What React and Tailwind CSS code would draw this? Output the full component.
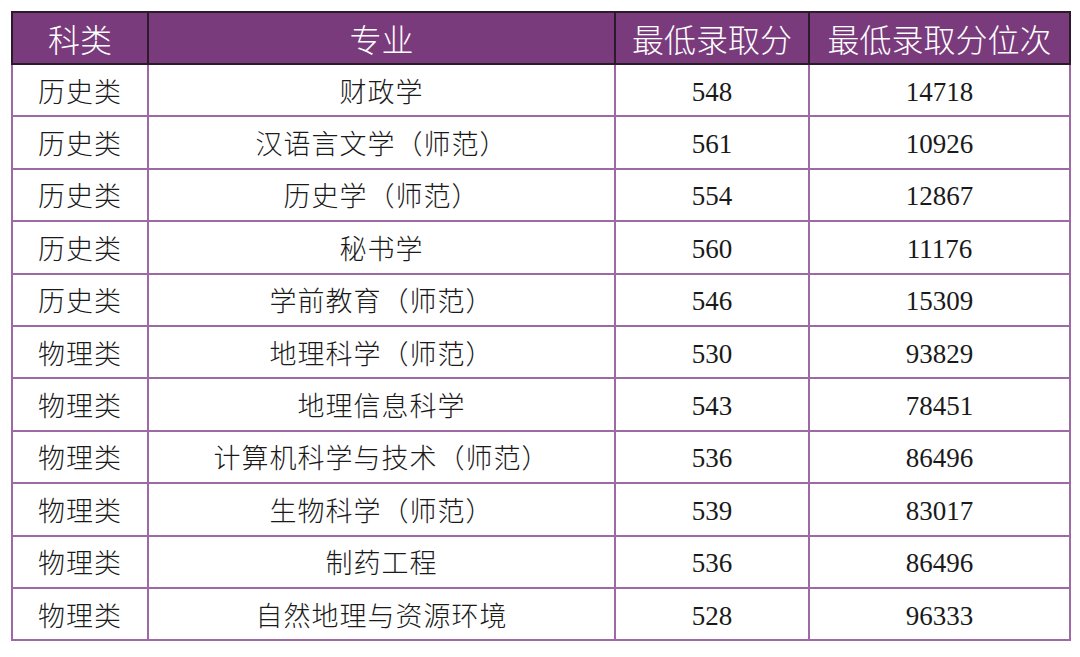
import React from 'react';

const rows = [
  ['历史类', '财政学', '548', '14718'],
  ['历史类', '汉语言文学（师范）', '561', '10926'],
  ['历史类', '历史学（师范）', '554', '12867'],
  ['历史类', '秘书学', '560', '11176'],
  ['历史类', '学前教育（师范）', '546', '15309'],
  ['物理类', '地理科学（师范）', '530', '93829'],
  ['物理类', '地理信息科学', '543', '78451'],
  ['物理类', '计算机科学与技术（师范）', '536', '86496'],
  ['物理类', '生物科学（师范）', '539', '83017'],
  ['物理类', '制药工程', '536', '86496'],
  ['物理类', '自然地理与资源环境', '528', '96333'],
];

const cjk = { fontFamily: '"Noto Sans CJK SC", sans-serif' };
const num = { fontFamily: '"Liberation Serif", "Noto Sans CJK SC", serif' };

const App = () => {
  return (
    <div className="w-[1080px] h-[657px] bg-white pt-[11px] pl-[11px]">
      <table className="border-collapse table-fixed w-[1058px]">
        <colgroup>
          <col className="w-[136px]" />
          <col className="w-[467px]" />
          <col className="w-[194px]" />
          <col className="w-[261px]" />
        </colgroup>
        <thead>
          <tr className="h-[52px] bg-[#7a3b7c] text-white text-[32px] leading-none">
            {['科类', '专业', '最低录取分', '最低录取分位次'].map((h) => (
              <th key={h} className="border-2 border-[#2a1a2a] font-light text-center p-0" style={cjk}>
                {h}
              </th>
            ))}
          </tr>
        </thead>
        <tbody>
          {rows.map((r, i) => (
            <tr key={i} className="h-[52.4px] leading-none text-[#1a1a1a]">
              <td className="border-2 border-[#9e6aa6] text-center p-0 text-[27px] tracking-[1px] font-light" style={cjk}>{r[0]}</td>
              <td className="border-2 border-[#9e6aa6] text-center p-0 text-[27px] tracking-[1px] font-light" style={cjk}>{r[1]}</td>
              <td className="border-2 border-[#9e6aa6] text-center p-0 pt-[4px] text-[27px]" style={num}>{r[2]}</td>
              <td className="border-2 border-[#9e6aa6] text-center p-0 pt-[4px] text-[27px]" style={num}>{r[3]}</td>
            </tr>
          ))}
        </tbody>
      </table>
    </div>
  );
};

export default App;
